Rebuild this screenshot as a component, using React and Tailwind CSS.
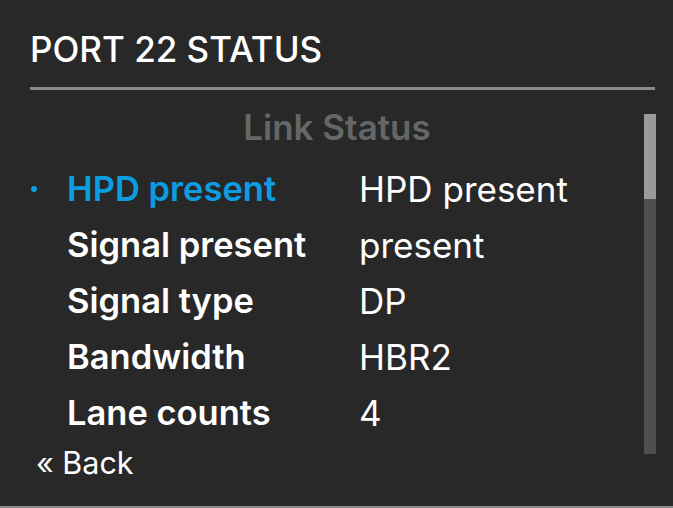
import { useState } from "react";

const rows = [
  { label: "HPD present", value: "HPD present" },
  { label: "Signal present", value: "present" },
  { label: "Signal type", value: "DP" },
  { label: "Bandwidth", value: "HBR2" },
  { label: "Lane counts", value: "4" },
];

export default function App() {
  const [selected, setSelected] = useState(0);

  return (
    <div
      className="w-[673px] h-[508px] bg-[#282828] text-white flex flex-col overflow-hidden border-b-2 border-[#8c8c8c]"
      style={{ fontFamily: "Inter, 'Noto Sans', sans-serif" }}
    >
      <div className="pl-[30px] pr-[18px] pt-[28px]">
        <h1 className="text-[35px] leading-[42px] font-medium">
          PORT 22 STATUS
        </h1>
        <div className="mt-[17px] h-[3px] bg-[#8a8a8a]" />
      </div>

      <div className="flex pl-[30px] pr-[17px] pt-[19px]">
        <div className="flex-1">
          <div className="text-center text-[35px] leading-[36px] font-semibold text-[#666666]">
            Link Status
          </div>
          <ul className="mt-[16px]">
            {rows.map((row, i) => (
              <li
                key={row.label}
                onClick={() => setSelected(i)}
                className="flex items-center h-[56px] cursor-pointer"
              >
                <span className="w-[37px] flex">
                  {selected === i && (
                    <span className="ml-[1px] w-[6px] h-[6px] rounded-full bg-[#0b9de0]" />
                  )}
                </span>
                <span
                  className={
                    "w-[292px] text-[34.5px] font-semibold " +
                    (selected === i ? "text-[#0b9de0]" : "text-white")
                  }
                >
                  {row.label}
                </span>
                <span className="text-[35px] font-normal">{row.value}</span>
              </li>
            ))}
          </ul>
        </div>
        <div className="w-[12px] h-[340px] bg-[#4f4f4f] mt-[5px]">
          <div className="h-[85px] bg-[#9a9a9a]" />
        </div>
      </div>

      <button className="self-start ml-[36px] mt-[-8px] text-[30.5px] leading-[34px] font-normal text-white">
        « Back
      </button>
    </div>
  );
}
